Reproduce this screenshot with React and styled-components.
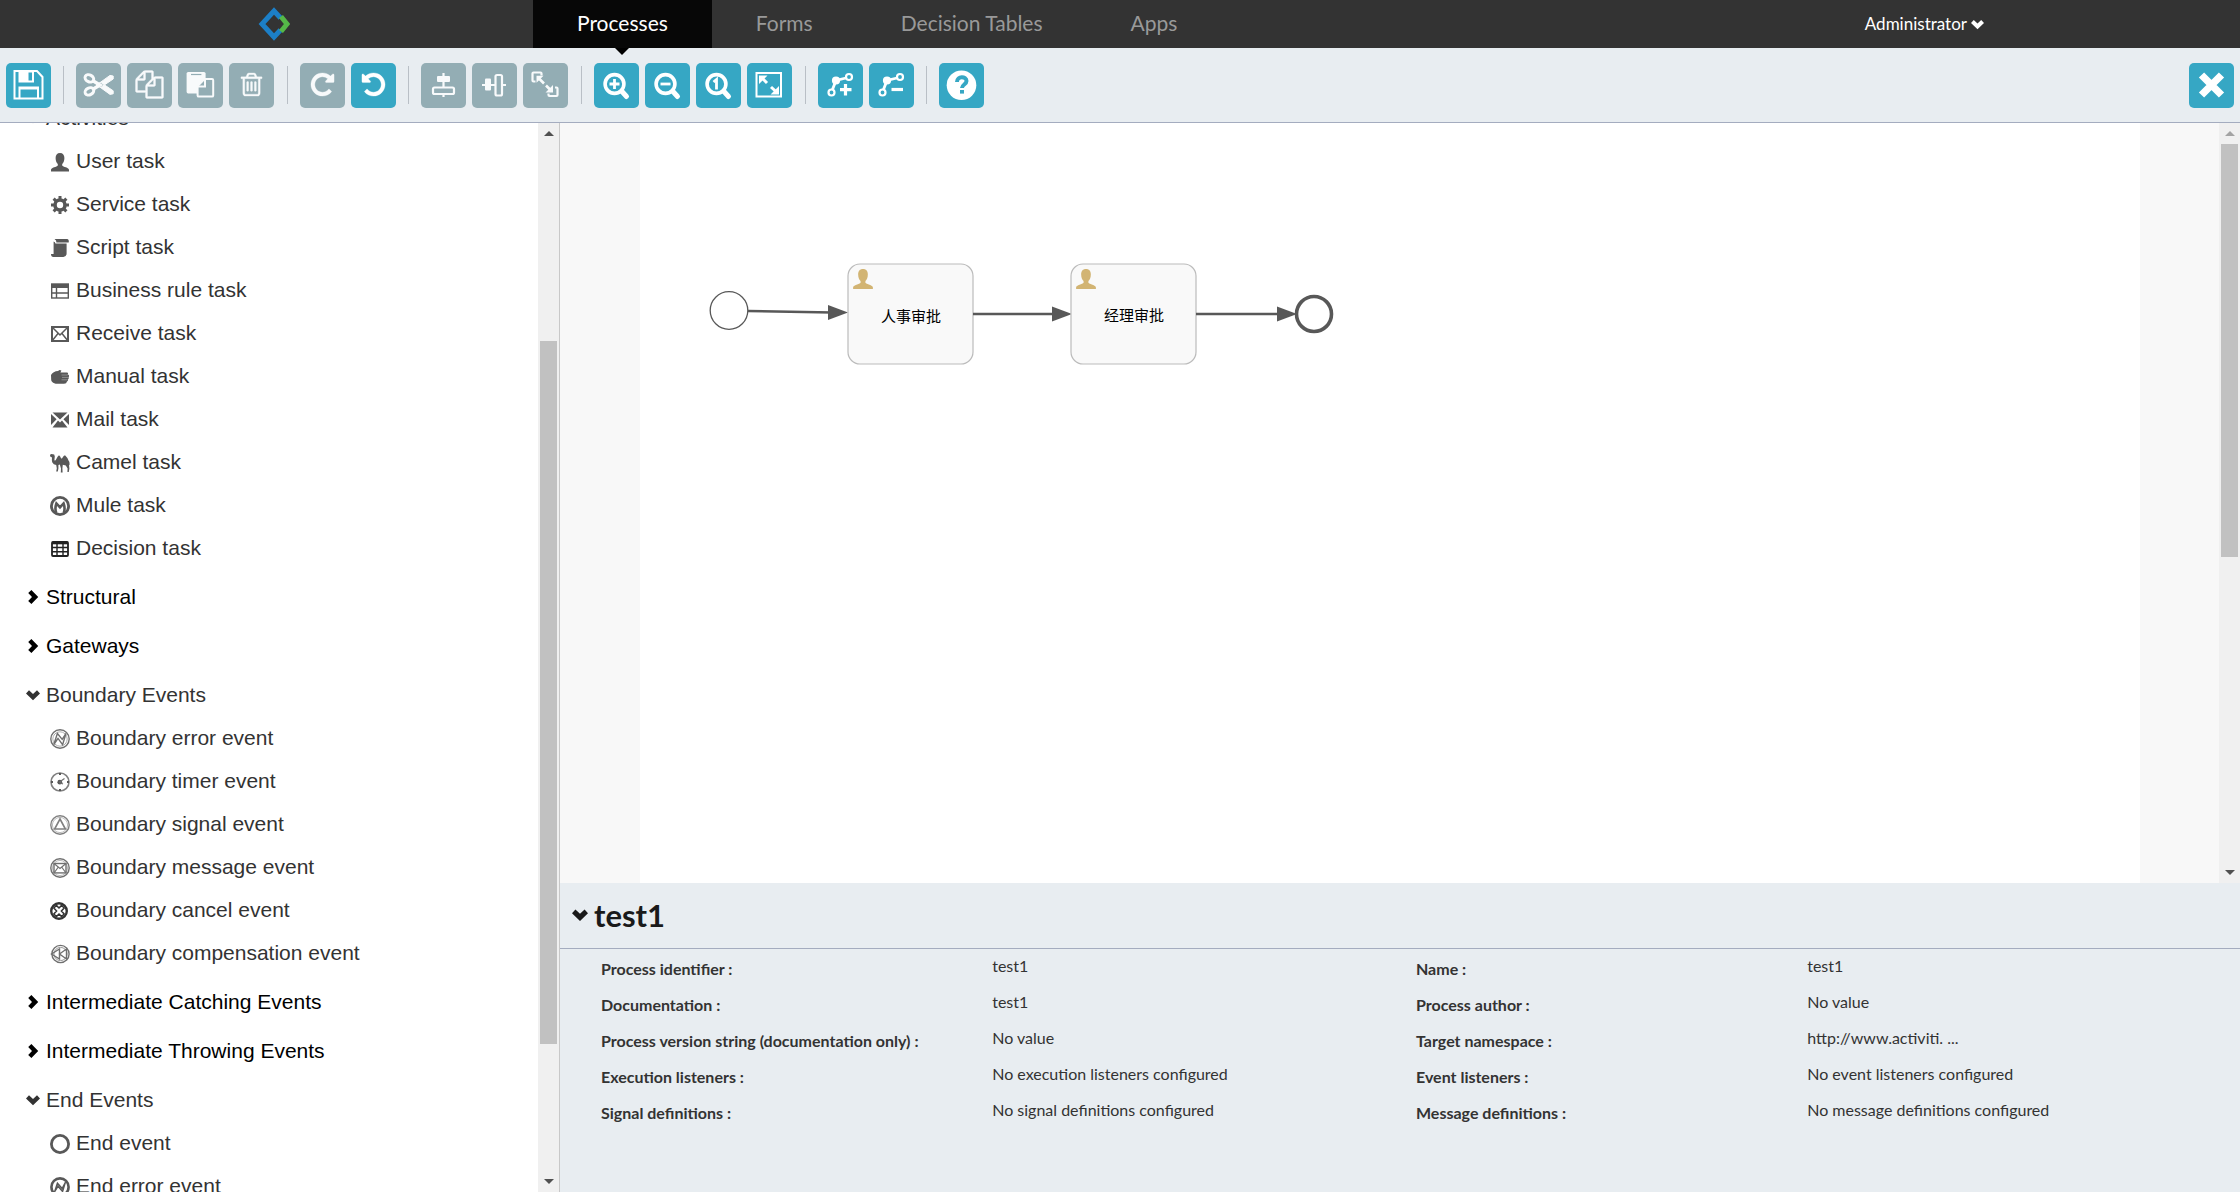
import React, { useState } from 'react'
import styled, { createGlobalStyle } from 'styled-components'

const fa = {
    copy: 'M1696 384q40 0 68 28t28 68v1216q0 40-28 68t-68 28h-960q-40 0-68-28t-28-68v-288h-544q-40 0-68-28t-28-68v-672q0-40 20-88t48-76l408-408q28-28 76-48t88-20h416q40 0 68 28t28 68v328q68-40 128-40h416zm-544 213l-299 299h299v-299zm-640-384l-299 299h299v-299zm196 647l316-316v-416h-384v416q0 40-28 68t-68 28h-416v640h512v-256q0-40 20-88t48-76zm956 804v-1152h-384v416q0 40-28 68t-68 28h-416v640h896z',
    trash: 'M704 736v576q0 14-9 23t-23 9h-64q-14 0-23-9t-9-23v-576q0-14 9-23t23-9h64q14 0 23 9t9 23zm256 0v576q0 14-9 23t-23 9h-64q-14 0-23-9t-9-23v-576q0-14 9-23t23-9h64q14 0 23 9t9 23zm256 0v576q0 14-9 23t-23 9h-64q-14 0-23-9t-9-23v-576q0-14 9-23t23-9h64q14 0 23 9t9 23zm128 724v-948h-896v948q0 22 7 40.5t14.5 27 10.5 8.5h832q3 0 10.5-8.5t14.5-27 7-40.5zm-672-1076h448l-48-117q-7-9-17-11h-317q-10 2-17 11zm928 32v64q0 14-9 23t-23 9h-96v948q0 83-47 143.5t-113 60.5h-832q-66 0-113-58.5t-47-141.5v-952h-96q-14 0-23-9t-9-23v-64q0-14 9-23t23-9h309l70-167q15-37 54-63t79-26h320q40 0 79 26t54 63l70 167h309q14 0 23 9t9 23z',
    repeat: 'M1664 256v448q0 26-19 45t-45 19h-448q-42 0-59-40-17-39 14-69l138-138q-148-137-349-137-104 0-198.5 40.5t-163.5 109.5-109.5 163.5-40.5 198.5 40.5 198.5 109.5 163.5 163.5 109.5 198.5 40.5q119 0 225-52t179-147q7-10 23-12 15 0 25 9l137 138q9 8 9.5 20.5t-7.5 22.5q-109 132-264 204.5t-327 72.5q-156 0-298-61t-245-164-164-245-61-298 61-298 164-245 245-164 298-61q147 0 284.5 55.5t244.5 156.5l130-129q29-31 70-14 39 17 39 59z',
}

const faIcon = (d, size = 27) => (
    <g transform={`translate(${22.5 - size / 2} ${21.5 - size / 2}) scale(${size / 1792})`}>
        <path d={d} fill='currentColor' stroke='currentColor' strokeWidth='20' />
    </g>
)

const lens = (
    <g fill='none' stroke='currentColor'>
        <circle cx='20.5' cy='21' r='9.4' strokeWidth='3.6' />
        <path d='M28 28.5l4.5 5' strokeWidth='5' strokeLinecap='round' />
    </g>
)

const bend = (
    <g fill='none' stroke='currentColor' strokeWidth='2.2'>
        <circle cx='31' cy='14' r='3' />
        <circle cx='13.5' cy='29.5' r='3' />
        <path d='M28 15L18 17.5L14.5 26.5' strokeWidth='2.8' />
        <circle cx='18' cy='17.5' r='3' fill='currentColor' />
    </g>
)

// all drawn on the 45x45 button
const toolIcons = {
    save: (
        <g fill='none' stroke='currentColor' strokeWidth='2'>
            <path d='M8.5 8H31L36.5 14V35.5H8.5Z' />
            <path fillRule='evenodd' fill='currentColor' stroke='none' d='M12.5 8H28V19.5H12.5ZM22.5 9.5H26V17.5H22.5Z' />
            <path d='M13.5 35V24.5H32V35M13.5 25.5H32' />
        </g>
    ),
    cut: (
        <g fill='none' stroke='currentColor' strokeWidth='3'>
            <ellipse cx='13.4' cy='15.4' rx='4.6' ry='3.4' transform='rotate(28 13.4 15.4)' />
            <ellipse cx='13.4' cy='28.4' rx='4.6' ry='3.4' transform='rotate(-28 13.4 28.4)' />
            <path d='M16.5 17.5L24 22L16.5 26.5' strokeWidth='3.4' />
            <path d='M20 22.5L34 12.4L37.2 13V16L25 24.2ZM20 21.3L34 31.4L37.2 30.8V27.8L25 19.6Z' fill='currentColor' strokeWidth='1' />
        </g>
    ),
    copy: faIcon(fa.copy, 28),
    paste: (
        <g>
            <rect x='8.6' y='9' width='19' height='21.4' rx='1.6' fill='currentColor' />
            <path d='M13 11.5H23.4' stroke='#93adb4' strokeWidth='1.2' />
            <path d='M26.5 16H34Q35.2 16 35.2 17.2V32.4Q35.2 33.6 34 33.6H20.8Q19.6 33.6 19.6 32.4V23Z' fill='#93adb4' stroke='currentColor' strokeWidth='2' />
            <path d='M27 16V23.4H19.6' fill='none' stroke='currentColor' strokeWidth='2' />
        </g>
    ),
    trash: faIcon(fa.trash),
    redo: faIcon(fa.repeat),
    undo: <g transform='matrix(-1 0 0 1 45 0)'>{faIcon(fa.repeat)}</g>,
    alignV: (
        <g fill='none' stroke='currentColor' strokeWidth='2.2'>
            <path d='M22.5 10V24M22.5 31V34' />
            <rect x='16' y='13' width='13' height='6' rx='1' fill='currentColor' stroke='none' />
            <rect x='12' y='24.5' width='21' height='6.5' rx='1.5' />
        </g>
    ),
    alignH: (
        <g fill='none' stroke='currentColor' strokeWidth='2.2'>
            <path d='M10 22H23M31 22H34' />
            <rect x='13' y='15.5' width='6' height='12' rx='1' fill='currentColor' stroke='none' />
            <rect x='23.5' y='12' width='6.5' height='20.5' rx='1.5' />
        </g>
    ),
    sameSize: (
        <g fill='none' stroke='currentColor' strokeWidth='2.2'>
            <path d='M18.5 12.5V10.5Q18.5 9.5 17.5 9.5H10.5Q9.5 9.5 9.5 10.5V17.5Q9.5 18.5 10.5 18.5H12.5' />
            <path d='M32 24.5H33.5Q34.5 24.5 34.5 25.5V32Q34.5 33 33.5 33H26.5Q25.5 33 25.5 32V30.5' />
            <path d='M16.5 16L21 20.5M23 22.5L28 27.5' strokeWidth='2.6' />
            <path d='M13.5 12.8H20.5L13.5 19.8ZM30 22V29.5H22.5Z' fill='currentColor' stroke='none' />
        </g>
    ),
    zoomIn: <g>{lens}<path d='M20.5 16V26M15.5 21H25.5' stroke='currentColor' strokeWidth='2.8' /></g>,
    zoomOut: <g>{lens}<path d='M15.5 21H25.5' stroke='currentColor' strokeWidth='2.8' /></g>,
    zoomActual: <g>{lens}<path d='M17.5 19L20.5 16.5V26.5' fill='none' stroke='currentColor' strokeWidth='2.8' /></g>,
    zoomFit: (
        <g fill='none' stroke='currentColor' strokeWidth='2'>
            <rect x='9.5' y='10' width='24.5' height='23.5' />
            <path d='M14 14L20 20M24 24L30 29.5' strokeWidth='3' />
            <path d='M12 12.5H20.5L12 21ZM32 23V31.5H23.5Z' fill='currentColor' stroke='none' />
        </g>
    ),
    bendAdd: <g>{bend}<path d='M27.5 21V32.5M22 26.7H33.5' stroke='currentColor' strokeWidth='3.2' /></g>,
    bendRemove: <g>{bend}<path d='M22.5 26.5H34' stroke='currentColor' strokeWidth='3.2' /></g>,
    help: (
        <g>
            <circle cx='22.5' cy='22.3' r='14.8' fill='currentColor' />
            <path d='M18 19C18 12.5 27.5 13 27.5 18C27.5 21.5 23 21.5 23 25' fill='none' stroke='#36a7c4' strokeWidth='4' />
            <rect x='21' y='27' width='4' height='3.6' fill='#36a7c4' />
        </g>
    ),
    close: <path d='M12.5 12L32.5 32M32.5 12L12.5 32' stroke='currentColor' strokeWidth='7.4' />,
}

const Chevron = ({ open, size = 14 }) => (
    <svg width={size} height={size} viewBox='0 0 14 14' aria-hidden='true'>
        <path
            d='M0 5.4L3 2.2L7 6L11 2.2L14 5.4L7 12.2Z'
            fill='currentColor'
            transform={open ? undefined : 'rotate(-90 7 7)'}
        />
    </svg>
)

const person = 'M10 1C13 1 14.4 3 14.4 6C14.4 9 13.4 10.8 12.2 12V13.6C13 15 19 15.6 19 18V19.5H1V18C1 15.6 7 15 7.8 13.6V12C6.6 10.8 5.6 9 5.6 6C5.6 3 7 1 10 1Z'

const treeIcons = {
    user: <path d={person} fill='#585858' />,
    service: (
        <g fill='none' stroke='#585858'>
            <circle cx='10' cy='10' r='5' strokeWidth='3.6' />
            <path d='M10 1V5M10 15V19M1 10H5M15 10H19M3.6 3.6L6.4 6.4M13.6 13.6L16.4 16.4M3.6 16.4L6.4 13.6M13.6 6.4L16.4 3.6' strokeWidth='3' />
        </g>
    ),
    script: (
        <g fill='#585858'>
            <path d='M4.5 1H17Q19.3 1.4 18.7 4.6H6.4Q6.6 2.4 4.5 1Z' />
            <path d='M3.6 3.4Q5.4 3.6 5.4 5.6H16.6V15.4Q16.6 18.6 13.4 19H3.4Q1 18.8 1 16H3.6Z' />
        </g>
    ),
    rule: (
        <g fill='none' stroke='#585858' strokeWidth='1.4'>
            <rect x='1.7' y='3' width='16.6' height='14' />
            <path d='M1.7 5H18.3' strokeWidth='4' />
            <path d='M1.7 12H18.3M6.5 5V17' />
        </g>
    ),
    receive: (
        <g fill='none' stroke='#585858' strokeWidth='2'>
            <rect x='2' y='3' width='16' height='14' />
            <path d='M2 3L10 11L18 3M2 17L8 9.5M18 17L12 9.5' strokeWidth='1.5' />
        </g>
    ),
    manual: (
        <g>
            <path d='M1 8C2 5.8 5 4 8 4L9.5 3L11.4 3.4L10.4 5.6H17.4Q18.8 6.6 17.6 7.8H18.6Q19.6 9 18.6 10.2Q19.2 11.6 18 12.4Q18.4 13.8 17 14.4Q16.6 16.8 14 16.8H7C4 16.8 1.5 15 1.2 13Z' fill='#585858' />
            <path d='M11.5 8H17.6M12 10.4H18.4M11.5 12.8H17.6' stroke='#b5b5b5' strokeWidth='0.6' />
        </g>
    ),
    mail: <path d='M2.5 2.5H17.5L10 9.5ZM1 4L6.6 9.2L1 15ZM19 4L13.4 9.2L19 15ZM2.5 17.5L8 10.6L10 12.4L12 10.6L17.5 17.5Z' fill='#585858' />,
    camel: <path d='M0 1.8L1.4 1L4.2 1.4L4.8 3.4L4.4 7.2Q5.4 8 6.2 6.2Q7.6 3 9 2.2Q10.4 3 11 5.2Q12 6 12.6 4.6Q13.6 2.6 15 2.2Q17.4 4.4 18.4 7.2Q19.8 8.6 19.6 11.4L19 12.4L19.4 15.4L18.8 19H17.4L17.6 15.6L15.8 12.6L12.8 11.8L12.4 15.2L12.6 19.4H10.8L11 15.6L9.8 11.6L8.4 12V15.4L7.8 18.6H6.2L6.8 15.2L6.2 12Q3.4 11.6 2.2 9.2Q1.6 7 2 4.4L0.2 3.4Z' fill='#585858' />,
    mule: (
        <g fill='none' stroke='#585858'>
            <circle cx='10' cy='10' r='8.6' strokeWidth='2.8' />
            <path d='M6.2 16.8Q4.6 12.4 6.4 7.4L10 11.4L13.6 7.4Q15.4 12.4 13.8 16.8' strokeWidth='2.6' />
        </g>
    ),
    decision: (
        <g fill='none' stroke='#222' strokeWidth='1.8'>
            <rect x='2' y='3' width='16' height='14' rx='1' />
            <path d='M2 4H18' strokeWidth='2.6' />
            <path d='M2 8.5H18M2 12.8H18M7 3V17M13 3V17' strokeWidth='1.4' />
        </g>
    ),
    error: (
        <g fill='none' stroke='#707070' strokeWidth='1.4'>
            <circle cx='10' cy='10' r='9.2' />
            <circle cx='10' cy='10' r='7.2' stroke='#999' strokeWidth='0.8' />
            <path d='M3.8 15.5L7.4 4.5L12.2 10.4L16 4.5L12.6 15.6L8 9.4Z' />
        </g>
    ),
    timer: (
        <g fill='none' stroke='#808080' strokeWidth='1.6'>
            <circle cx='10' cy='10' r='9' />
            <path d='M10 1V3M10 17V19M1 10H3M17 10H19' stroke='#585858' strokeWidth='2' />
            <circle cx='9.8' cy='10.2' r='2.4' fill='#585858' stroke='none' />
            <path d='M9.5 10L14.5 6.5M9.5 10.5L13 12' stroke='#707070' strokeWidth='1.2' />
        </g>
    ),
    signal: (
        <g fill='none' stroke='#808080' strokeWidth='1.4'>
            <circle cx='10' cy='10' r='9.2' />
            <circle cx='10' cy='10' r='7.6' stroke='#aaa' strokeWidth='0.8' />
            <path d='M10 4L15.4 14H4.6Z' strokeWidth='1.6' />
        </g>
    ),
    message: (
        <g fill='none' stroke='#707070' strokeWidth='1.4'>
            <circle cx='10' cy='10' r='9.2' />
            <circle cx='10' cy='10' r='7.6' stroke='#aaa' strokeWidth='0.8' />
            <rect x='4' y='5.5' width='12' height='9.4' />
            <path d='M4 5.5L10 10.5L16 5.5M4 15L8 9.5M16 15L12 9.5' strokeWidth='1.2' />
        </g>
    ),
    cancel: (
        <g fill='none' stroke='#333'>
            <circle cx='9' cy='10' r='7.8' strokeWidth='2.4' />
            <path d='M3.8 7L6.4 4.4L9 7L11.6 4.4L14.2 7L11.4 10L14.2 13L11.6 15.6L9 13L6.4 15.6L3.8 13L6.6 10Z' strokeWidth='1.5' fill='#fff' />
        </g>
    ),
    compensation: (
        <g fill='none' stroke='#707070' strokeWidth='1.4'>
            <circle cx='10.5' cy='10' r='8.6' />
            <circle cx='10.5' cy='10' r='6.6' stroke='#999' strokeWidth='1' />
            <path d='M1.5 10L9.5 5V15ZM9.5 10L16.5 5V15Z' />
        </g>
    ),
    end: <circle cx='10' cy='10' r='8.6' fill='none' stroke='#585858' strokeWidth='2.8' />,
    endError: (
        <g fill='none' stroke='#585858'>
            <circle cx='10' cy='10' r='8.6' strokeWidth='2.6' />
            <path d='M4.5 15L7.4 6L12.2 11.4L15.5 5L12.6 14.6L8 9.4Z' strokeWidth='1.3' fill='#8a8a8a' />
        </g>
    ),
}

const tabs = ['Processes', 'Forms', 'Decision Tables', 'Apps']

const toolGroups = [
    [{ icon: 'save', label: 'Save the model' }],
    [
        { icon: 'cut', label: 'Cut', disabled: true },
        { icon: 'copy', label: 'Copy', disabled: true },
        { icon: 'paste', label: 'Paste', disabled: true },
        { icon: 'trash', label: 'Delete', disabled: true },
    ],
    [
        { icon: 'redo', label: 'Redo', disabled: true },
        { icon: 'undo', label: 'Undo' },
    ],
    [
        { icon: 'alignV', label: 'Align vertical', disabled: true },
        { icon: 'alignH', label: 'Align horizontal', disabled: true },
        { icon: 'sameSize', label: 'Same size', disabled: true },
    ],
    [
        { icon: 'zoomIn', label: 'Zoom in' },
        { icon: 'zoomOut', label: 'Zoom out' },
        { icon: 'zoomActual', label: 'Zoom to actual size' },
        { icon: 'zoomFit', label: 'Zoom to fit' },
    ],
    [
        { icon: 'bendAdd', label: 'Add bend-point' },
        { icon: 'bendRemove', label: 'Remove bend-point' },
    ],
    [{ icon: 'help', label: 'Help' }],
]

const palette = [
    {
        title: 'Activities',
        open: true,
        items: [
            ['user', 'User task'],
            ['service', 'Service task'],
            ['script', 'Script task'],
            ['rule', 'Business rule task'],
            ['receive', 'Receive task'],
            ['manual', 'Manual task'],
            ['mail', 'Mail task'],
            ['camel', 'Camel task'],
            ['mule', 'Mule task'],
            ['decision', 'Decision task'],
        ],
    },
    { title: 'Structural', items: [] },
    { title: 'Gateways', items: [] },
    {
        title: 'Boundary Events',
        open: true,
        items: [
            ['error', 'Boundary error event'],
            ['timer', 'Boundary timer event'],
            ['signal', 'Boundary signal event'],
            ['message', 'Boundary message event'],
            ['cancel', 'Boundary cancel event'],
            ['compensation', 'Boundary compensation event'],
        ],
    },
    { title: 'Intermediate Catching Events', items: [] },
    { title: 'Intermediate Throwing Events', items: [] },
    {
        title: 'End Events',
        open: true,
        items: [
            ['end', 'End event'],
            ['endError', 'End error event'],
        ],
    },
]

const properties = [
    ['Process identifier', 'test1'],
    ['Name', 'test1'],
    ['Documentation', 'test1'],
    ['Process author', 'No value'],
    ['Process version string (documentation only)', 'No value'],
    ['Target namespace', 'http://www.activiti. ...'],
    ['Execution listeners', 'No execution listeners configured'],
    ['Event listeners', 'No event listeners configured'],
    ['Signal definitions', 'No signal definitions configured'],
    ['Message definitions', 'No message definitions configured'],
]

const Tool = ({ icon, label, disabled }) => (
    <ToolButton type='button' title={label} aria-label={label} disabled={disabled}>
        <svg width='45' height='45' viewBox='0 0 45 45'>{toolIcons[icon]}</svg>
    </ToolButton>
)

const PaletteGroup = ({ title, open: initial, items }) => {
    const [open, setOpen] = useState(!!initial)

    return (
        <li>
            <GroupButton type='button' $open={open} aria-expanded={open} onClick={() => setOpen(!open)}>
                <Chevron open={open} />
                {title}
            </GroupButton>
            {open && (
                <List>
                    {items.map(([icon, label]) => (
                        <Item key={label} draggable>
                            <svg width='20' height='20' viewBox='0 0 20 20' aria-hidden='true'>{treeIcons[icon]}</svg>
                            {label}
                        </Item>
                    ))}
                </List>
            )}
        </li>
    )
}

const Scrollbar = ({ start, size, atTop }) => (
    <Bar aria-hidden='true'>
        <Arrow $up $dim={atTop} />
        <Track>
            <Thumb style={{ top: `${start}%`, height: `${size}%` }} />
        </Track>
        <Arrow />
    </Bar>
)

const Task = ({ x, y, textY, name }) => (
    <g transform={`translate(${x} ${y})`}>
        <rect width='125' height='100' rx='12' fill='#f9f9f9' stroke='#bbb' strokeWidth='1.2' />
        <path d={person} fill='#d2b473' transform='translate(4 4) scale(1.1 1.08)' />
        <NodeText x='63' y={textY}>{name}</NodeText>
    </g>
)

const Flow = ({ x1, y1, x2, y2 }) => (
    <g stroke='#585858' fill='#585858'>
        <path d={`M${x1} ${y1}L${x2 - 16} ${y2}`} strokeWidth='2.5' />
        <path d={`M${x2} ${y2}L${x2 - 20} ${y2 - 7.5}V${y2 + 7.5}Z`} stroke='none' />
    </g>
)

const Diagram = () => (
    <DiagramSvg role='img' aria-label='test1'>
        <circle cx='89' cy='187.5' r='18.8' fill='#fff' stroke='#585858' strokeWidth='1.3' />
        <Flow x1={108} y1={188} x2={208} y2={189.5} />
        <Task x={208} y={141} textY={58} name='人事审批' />
        <Flow x1={333} y1={191} x2={432} y2={191} />
        <Task x={431} y={141} textY={57} name='经理审批' />
        <Flow x1={556} y1={191} x2={657} y2={191} />
        <circle cx='674' cy='191' r='17.5' fill='#fff' stroke='#585858' strokeWidth='3.6' />
    </DiagramSvg>
)

const App = () => {
    const [tab, setTab] = useState('Processes')

    return (
        <Page>
            <GlobalStyle />
            <Header>
                <Logo href='#' aria-label='Home'>
                    <svg width='32' height='34' viewBox='0 0 32 34'>
                        <path d='M22.5 11L16 4L4 17L16 30L22.5 23' fill='none' stroke='#1c7fc7' strokeWidth='5' />
                        <path d='M23 9.5L29 17L23 24.5' fill='none' stroke='#55b848' strokeWidth='5' />
                    </svg>
                </Logo>
                <Nav>
                    {tabs.map(name => (
                        <Tab
                            key={name}
                            href='#'
                            $active={name === tab}
                            onClick={() => setTab(name)}
                        >
                            {name}
                        </Tab>
                    ))}
                </Nav>
                <Account type='button'>
                    Administrator
                    <Chevron open size={13} />
                </Account>
            </Header>

            <Toolbar>
                {toolGroups.map((group, index) => (
                    <ToolGroup key={index} $long={group.length > 2}>
                        {group.map(tool => <Tool key={tool.icon} {...tool} />)}
                    </ToolGroup>
                ))}
                <CloseGroup>
                    <Tool icon='close' label='Close the editor' />
                </CloseGroup>
            </Toolbar>

            <Main>
                <Sidebar>
                    <Palette>
                        {palette.map(group => <PaletteGroup key={group.title} {...group} />)}
                    </Palette>
                    <Scrollbar start={19.2} size={68.4} />
                </Sidebar>
                <Editor>
                    <CanvasArea>
                        <CanvasWrap>
                            <Canvas>
                                <Diagram />
                            </Canvas>
                        </CanvasWrap>
                        <Scrollbar start={0} size={57.5} atTop />
                    </CanvasArea>
                    <Properties>
                        <PropertiesTitle>
                            <Chevron open size={16} />
                            test1
                        </PropertiesTitle>
                        <PropertyList>
                            {properties.map(([name, value]) => (
                                <Property key={name}>
                                    <dt>{name} :</dt>
                                    <dd>{value}</dd>
                                </Property>
                            ))}
                        </PropertyList>
                    </Properties>
                </Editor>
            </Main>
        </Page>
    )
}

export default App



const GlobalStyle = createGlobalStyle`
    * {
        box-sizing: border-box;
    }
    body {
        margin: 0;
        font-family: Lato, "Noto Sans CJK SC", sans-serif;
        color: #333;
    }
    button {
        border: 0;
        padding: 0;
        background: none;
        font-family: inherit;
        cursor: pointer;
    }
`;

const Page = styled.div`
    display: flex;
    flex-direction: column;
    height: 100vh;
    background: #fff;
`;

const Header = styled.header`
    display: flex;
    flex: none;
    height: 48px;
    padding: 0 256px 0 258px;
    background: #333;
`;

const Logo = styled.a`
    display: flex;
    align-items: center;
    flex: 0 0 275px;
`;

const Nav = styled.nav`
    display: flex;
    flex: 1;
`;

const Tab = styled.a`
    position: relative;
    padding: 0 44px;
    font-size: 21px;
    line-height: 46px;
    text-decoration: none;
    white-space: nowrap;
    color: ${({ $active }) => $active ? '#fff' : '#999'};
    background: ${({ $active }) => $active ? '#070707' : 'transparent'};

    &::after {
        content: '';
        display: ${({ $active }) => $active ? 'block' : 'none'};
        position: absolute;
        z-index: 1;
        top: 100%;
        left: 50%;
        margin-left: -7px;
        border: 7px solid transparent;
        border-top-color: #000;
        border-bottom: 0;
    }
`;

const Account = styled.button`
    display: flex;
    align-items: center;
    gap: 4px;
    font-size: 17px;
    line-height: 46px;
    color: #fff;
`;

const Toolbar = styled.div`
    display: flex;
    flex: none;
    align-items: center;
    height: 75px;
    padding: 0 6px;
    background: #e8edf1;
    border-bottom: 1px solid #a4acbf;
`;

const ToolGroup = styled.div`
    display: flex;
    align-items: center;
    gap: 6px;
    margin-right: ${({ $long }) => $long ? 1 : 0}px;

    &:not(:first-child)::before {
        content: '';
        width: 1px;
        height: 38px;
        margin: 0 6px 0 12px;
        background: #b9bfc6;
    }
`;

const CloseGroup = styled.div`
    margin-left: auto;
`;

const ToolButton = styled.button`
    display: block;
    width: 45px;
    height: 45px;
    border-radius: 5px;
    color: #fff;
    background: #36a7c4;

    &:disabled {
        color: #f8fafb;
        background: #93adb4;
        cursor: default;
    }
    svg {
        display: block;
    }
`;

const Main = styled.main`
    display: flex;
    flex: 1;
    min-height: 0;
`;

const Sidebar = styled.aside`
    display: flex;
    flex: 0 0 25%;
    border-right: 1px solid #c8c8c8;
    overflow: hidden;
`;

const List = styled.ul`
    margin: 0;
    padding: 0;
    list-style: none;
`;

// scrolled down to the activities
const Palette = styled(List)`
    flex: 1;
    min-width: 0;
    margin-top: -32px;
    font-family: "Liberation Sans", Arial, sans-serif;
    font-size: 21px;
`;

const GroupButton = styled.button`
    display: flex;
    align-items: center;
    gap: 6px;
    width: 100%;
    height: 43px;
    margin-top: 6px;
    padding: 0 0 2px 26px;
    font-size: 21px;
    text-align: left;
    color: ${({ $open }) => $open ? '#333' : '#000'};
`;

const Item = styled.li`
    display: flex;
    align-items: center;
    gap: 6px;
    height: 43px;
    padding: 0 0 2px 50px;
    color: #333;
    white-space: nowrap;
    cursor: move;

    svg {
        margin-top: 2px;
    }
`;

const Bar = styled.div`
    display: flex;
    flex: 0 0 21px;
    flex-direction: column;
    background: #f0f0f0;
`;

const Arrow = styled.div`
    display: grid;
    place-items: center;
    height: 21px;

    &::before {
        content: '';
        border: 5px solid transparent;
        ${({ $up, $dim }) => $up
            ? `border-top: 0; border-bottom-color: ${$dim ? '#a3a3a3' : '#505050'};`
            : 'border-bottom: 0; border-top-color: #505050;'}
    }
`;

const Track = styled.div`
    flex: 1;
    padding: 0 2px;
`;

const Thumb = styled.div`
    position: relative;
    background: #c1c1c1;
`;

const Editor = styled.section`
    display: flex;
    flex: 1;
    flex-direction: column;
    min-width: 0;
`;

const CanvasArea = styled.div`
    display: flex;
    flex: 1;
    min-height: 0;
`;

const CanvasWrap = styled.div`
    display: flex;
    flex: 1;
    min-width: 0;
    padding: 0 79px 0 80px;
    background: #f8f8f8;
`;

const Canvas = styled.div`
    flex: 1;
    min-width: 0;
    background: #fff;
`;

const DiagramSvg = styled.svg`
    display: block;
    width: 100%;
    height: 100%;
`;

const NodeText = styled.text`
    font-family: "Noto Sans CJK SC", sans-serif;
    font-size: 15px;
    text-anchor: middle;
    fill: #000;
`;

const Properties = styled.div`
    flex: none;
    padding-bottom: 63px;
    background: #e8edf1;
`;

const PropertiesTitle = styled.h2`
    display: flex;
    align-items: center;
    gap: 6px;
    height: 66px;
    margin: 0;
    padding: 0 12px 2px;
    border-bottom: 1px solid #a4acbf;
    font-size: 31px;
    font-weight: 700;
    color: #1a1a1a;
`;

const PropertyList = styled.dl`
    display: grid;
    grid-template-columns: 1fr 1fr;
    margin: 0;
    padding: 0 9px 0 41px;
    font-size: 16px;
`;

const Property = styled.div`
    display: grid;
    grid-template-columns: 48% 52%;

    dt {
        padding-top: 4px;
        line-height: 32px;
        font-weight: 700;
    }
    dd {
        margin: 0;
        line-height: 34px;
    }
`;
